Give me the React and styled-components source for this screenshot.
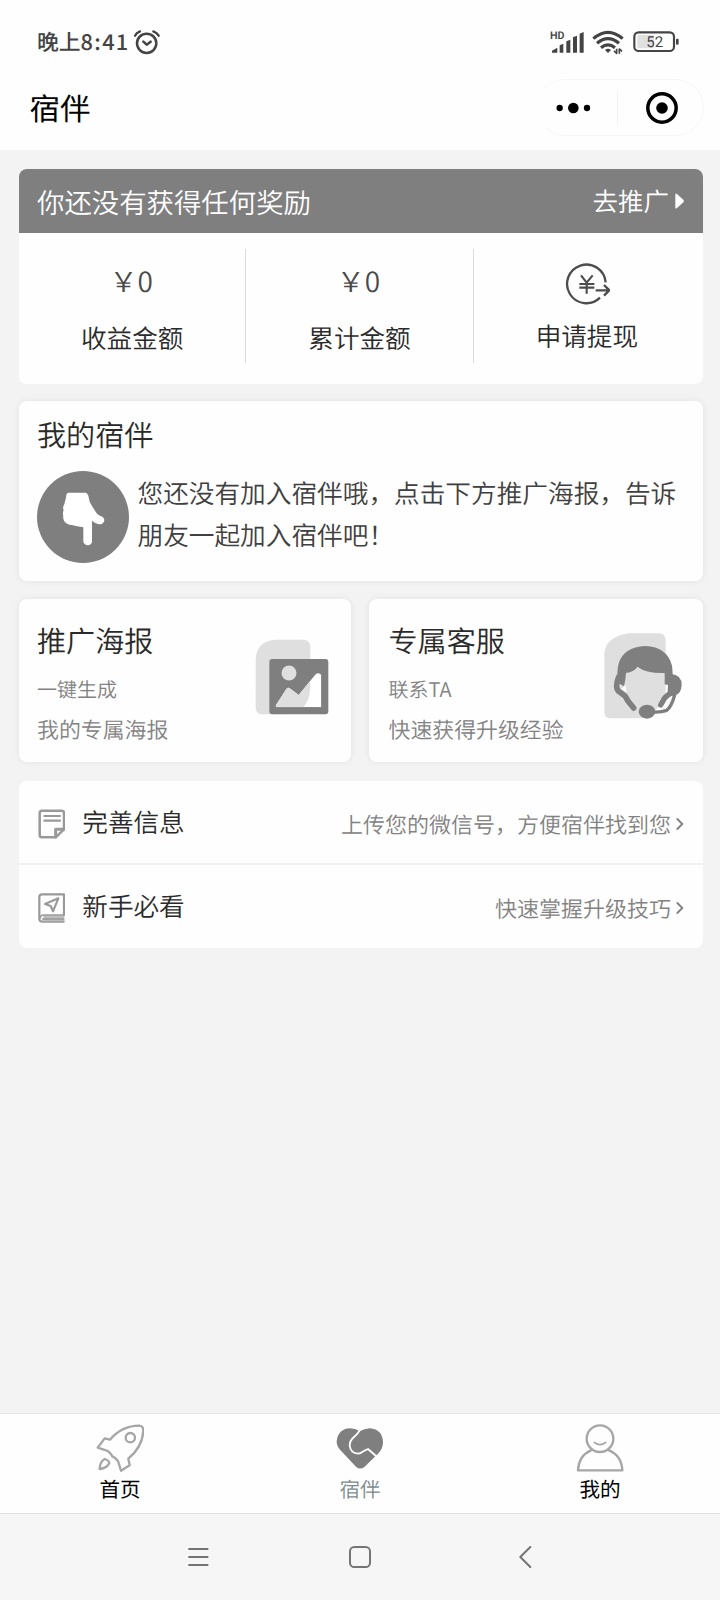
import React from 'react';
import styled, { createGlobalStyle } from 'styled-components';

const colors = {
  page: '#f3f3f3',
  banner: '#7f7f7f',
  text: '#2a2a2a',
  body: '#404040',
  muted: '#828282',
  icon: '#999',
  light: '#dfdfdf',
  status: '#444',
};

const GlobalStyle = createGlobalStyle`
  * {
    box-sizing: border-box;
  }
  body {
    margin: 0;
    background: ${colors.page};
    font-family: 'Noto Sans CJK SC', 'Noto Sans', sans-serif;
    font-weight: 350;
    color: ${colors.text};
    text-rendering: geometricPrecision;
  }
`;

const Screen = styled.div`
  display: flex;
  flex-direction: column;
  width: 720px;
  height: 1600px;
  background: ${colors.page};
`;

const StatusBar = styled.div`
  display: flex;
  align-items: center;
  height: 65px;
  padding: 19px 41px 0 37px;
  background: #fefefe;
`;

const Clock = styled.span`
  margin-right: auto;
  display: flex;
  align-items: center;
  font-size: 21.8px;
  font-weight: 500;
  line-height: 40px;
  color: ${colors.status};
`;

const Digits = styled.span`
  margin-right: 3px;
  letter-spacing: 1.3px;
`;

const StatusIcons = styled.div`
  display: flex;
  align-items: center;
  gap: 9px;

  svg:first-child {
    margin-right: -2px;
  }
`;

const NavBar = styled.div`
  display: flex;
  align-items: center;
  justify-content: space-between;
  height: 85px;
  padding: 0 16px 2px 29.5px;
  background: #fefefe;
`;

const NavTitle = styled.h1`
  margin: 0;
  font-size: 30.5px;
  font-weight: 400;
  line-height: 44px;
  color: #000;
`;

const Capsule = styled.div`
  display: flex;
  width: 167px;
  height: 57px;
  margin-top: 2px;
  border: 1px solid #f6f6f6;
  border-left-color: transparent;
  border-radius: 29px;
`;

const CapsuleMenu = styled.div`
  display: flex;
  align-items: center;
  width: 79px;
  padding-left: 18px;
`;

const CapsuleClose = styled.div`
  flex: 1;
  display: flex;
  align-items: center;
  justify-content: center;
  padding-left: 4px;
  position: relative;

  &::before {
    content: '';
    position: absolute;
    left: 0;
    top: 10px;
    bottom: 10px;
    width: 1px;
    background: #f2f2f2;
  }
`;

const Content = styled.main`
  flex: 1;
  display: flex;
  flex-direction: column;
  padding: 19px 17px 0 19px;
`;

const Card = styled.section`
  border-radius: 8px;
  background: #fefefe;
  box-shadow: 0 0 7px rgba(0, 0, 0, 0.07);
`;

const RewardCard = styled(Card)`
  height: 215px;
  margin-bottom: 17px;
  overflow: hidden;
  box-shadow: none;
`;

const Banner = styled.div`
  display: flex;
  align-items: center;
  justify-content: space-between;
  height: 64px;
  padding: 0 19px 1px 18px;
  background: ${colors.banner};
  color: #fff;
  font-size: 27.4px;
  line-height: 40px;
`;

const BannerLink = styled.span`
  display: flex;
  align-items: center;
  gap: 6px;
  font-size: 25.5px;
`;

const Stats = styled.div`
  display: flex;
  padding: 16px 3px 0 0;
`;

const Stat = styled.div`
  flex: 1;
  display: flex;
  flex-direction: column;
  align-items: center;
  height: 114px;
  border-right: ${props => (props.$last ? 'none' : '1px solid #dcdcdc')};
`;

const StatValue = styled.span`
  margin: 12px 2px 19px 0;
  font-size: 28px;
  line-height: 40px;
  color: #4a4a4a;
`;

const StatIcon = styled.div`
  height: 44px;
  margin: 13px 0 12px;
`;

const StatLabel = styled.span`
  font-size: 25.6px;
  line-height: 36px;
`;

const MateCard = styled(Card)`
  height: 180px;
  margin-bottom: 18px;
  padding: 12px 18px 0;
`;

const CardTitle = styled.h2`
  margin: 0;
  font-size: 29.1px;
  font-weight: inherit;
  line-height: 42px;
  color: ${colors.text};
`;

const Hint = styled.div`
  display: flex;
  align-items: center;
  gap: 8.5px;
  margin-top: 16px;
`;

const HintText = styled.p`
  margin: 0 -8px 6px 0;
  font-size: 25.66px;
  line-height: 42px;
  color: ${colors.body};
`;

const Tiles = styled.div`
  display: grid;
  grid-template-columns: 332px 334px;
  gap: 18px;
  margin-bottom: 19px;
`;

const Tile = styled(Card)`
  display: flex;
  justify-content: space-between;
  height: 163px;
  padding: 20px ${props => props.$right}px 0 ${props => props.$left}px;
`;

const TileText = styled.div`
  display: flex;
  flex-direction: column;
  color: ${colors.muted};
`;

const TileSmall = styled.span`
  margin-top: 12.5px;
  font-size: 20px;
  line-height: 30px;
`;

const TileLine = styled.span`
  margin-top: 10.5px;
  font-size: 21.9px;
  line-height: 32px;
`;

const TileArt = styled.div`
  margin-top: ${props => props.$top}px;
`;

const List = styled(Card)`
  box-shadow: none;
`;

const Row = styled.div`
  display: flex;
  align-items: center;
  height: 84px;
  padding: 3px 19px 0;

  & + & {
    height: 83px;
  }
  &:first-child {
    border-bottom: 2px solid #f1f1f1;
  }
`;

const RowTitle = styled.span`
  margin: 0 auto 4px 17px;
  font-size: 25.6px;
  line-height: 36px;
`;

const RowHint = styled.span`
  display: flex;
  align-items: center;
  gap: 5px;
  font-size: 22px;
  line-height: 32px;
  color: ${colors.muted};
`;

const TabBar = styled.nav`
  display: flex;
  height: 101px;
  border-top: 1px solid #e6e6e6;
  border-bottom: 1px solid #e2e2e2;
  background: #fefefe;
`;

const Tab = styled.div`
  flex: 1;
  display: flex;
  flex-direction: column;
  align-items: center;
  padding-top: 9.5px;
  font-size: 20.6px;
  font-weight: ${props => (props.$active ? 350 : 400)};
  line-height: 30px;
  color: ${props => (props.$active ? '#7f8c8c' : '#000')};

  svg {
    margin-bottom: 1px;
  }
`;

const SystemBar = styled.div`
  display: flex;
  align-items: center;
  justify-content: space-between;
  height: 86px;
  padding: 0 188px 1px;
  background: #f6f6f6;

  svg:last-child {
    margin-left: 8px;
  }
`;

// every icon is drawn on a grid of 3 units per pixel
const Icon = ({ box, children, ...rest }) => {
  const [, , w, h] = box.split(' ');
  return (
    <svg
      display="block"
      width={w / 3}
      height={h / 3}
      viewBox={box}
      fill="none"
      strokeLinecap="round"
      strokeLinejoin="round"
      {...rest}
    >
      {children}
    </svg>
  );
};

const AlarmIcon = () => (
  <Icon box="396 86 84 78" stroke={colors.status} strokeWidth="7.5">
    <circle cx="437" cy="129" r="29" />
    <path d="M402 106Q406 97 417 93M457 93Q468 97 473 106" strokeWidth="7" />
    <path d="M427 124l10 9 12-9" />
  </Icon>
);

const SignalIcon = () => (
  <Icon box="568 90 104 72" fill={colors.status}>
    <text x="568" y="117" fontSize="32" fontWeight="600" fontFamily="Roboto, sans-serif">
      HD
    </text>
    <path d="M574 158V152L590 143V158ZM597 158V136L608 131V158ZM617 158V124L629 119V158ZM637 158V112L649 107V158ZM657 158V101L669 96V158Z" />
  </Icon>
);

const WifiIcon = () => (
  <Icon box="694 88 96 76" stroke={colors.status} strokeWidth="9.5" strokeLinecap="butt">
    <path d="M698 117Q742 79 786 117M709 131Q742 103 775 131M721 144Q742 127 763 144" />
    <path d="M733 151Q742 143 751 151L742 160Z" fill={colors.status} stroke="none" />
    <path d="M768 147V161L760 154M776 162V148L784 155" strokeWidth="5" />
  </Icon>
);

const BatteryIcon = () => (
  <Icon box="817 94 138 64">
    <rect x="830" y="106" width="50" height="40" rx="5" fill="#e0e0e0" />
    <rect x="821" y="98" width="119" height="56" rx="13" stroke={colors.status} strokeWidth="6.5" />
    <rect x="946" y="117" width="8" height="18" rx="3" fill={colors.status} />
    <text
      x="882"
      y="143"
      textAnchor="middle"
      fontSize="45"
      fontWeight="400"
      fontFamily="Roboto, sans-serif"
      fill={colors.status}
    >
      52
    </text>
  </Icon>
);

const DotsIcon = () => (
  <Icon box="588 304 104 36" fill="#000">
    <circle cx="599" cy="322" r="9.5" />
    <circle cx="640" cy="322" r="16" />
    <circle cx="681" cy="322" r="9.5" />
  </Icon>
);

const TargetIcon = () => (
  <Icon box="858 276 96 96">
    <circle cx="906" cy="324" r="42.5" stroke="#000" strokeWidth="10.5" />
    <circle cx="906" cy="324" r="17.5" fill="#000" />
  </Icon>
);

const CaretIcon = () => (
  <Icon box="944 132 27 48" fill="#fff">
    <path d="M945 137Q945 131 950 135L969 152Q972 156 969 160L950 177Q945 181 945 175Z" />
  </Icon>
);

const WithdrawIcon = () => (
  <Icon box="608 336 142 130" stroke="#4d4d4d" strokeWidth="7" strokeLinecap="butt">
    <path d="M736 397A58 58 0 1 0 719 443" />
    <path d="M706 421H746M731 405L747 421L731 437" />
    <path d="M662 376L679 398L697 376M679 398V431M657 402H702M657 413H702" strokeWidth="6.5" />
  </Icon>
);

const HandIcon = () => (
  <Icon box="110 242 276 276">
    <circle cx="248" cy="380" r="138" fill={colors.banner} />
    <path
      fill="#fff"
      d="M204 307H256Q262 308 264 316L268 334Q276 350 290 370Q296 376 306 379Q314 384 311 394Q306 403 296 402Q284 400 275 391V455Q273 464 263 465Q252 464 249 455V411Q230 408 214 404Q200 403 193 394Q187 386 189 376Q186 368 190 360Q186 350 192 342Q194 332 197 322Q197 309 204 307Z"
    />
  </Icon>
);

const PosterIcon = () => (
  <Icon box="764 148 222 228">
    <clipPath id="hill">
      <path d="M827 346L858 298Q863 291 870 297L895 316L946 254Q955 246 963 256V353H830Q824 352 827 346Z" />
    </clipPath>
    <path id="sheet" fill={colors.light} d="M826 150H908Q930 151 930 172V290Q928 374 850 374H784Q766 372 766 354V210Q768 154 826 150Z" />
    <rect x="807" y="208" width="177" height="166" rx="9" fill={colors.banner} />
    <circle cx="866" cy="250" r="22.5" fill={colors.light} />
    <g clipPath="url(#hill)">
      <rect x="807" y="208" width="177" height="166" fill="#fff" />
      <use href="#sheet" />
    </g>
  </Icon>
);

const ServiceIcon = () => (
  <Icon box="732 130 234 258" stroke={colors.banner} strokeWidth="14">
    <path
      stroke="none"
      fill={colors.light}
      d="M806 131H896Q917 132 917 154V330L895 352L862 386H748Q733 384 733 368V190Q738 142 806 131Z"
    />
    <path d="M776 262Q764 292 775 304L796 320L804 334L821 355" strokeWidth="17" />
    <path d="M784 298L796 286L800 308Z" fill="#fff" stroke="none" />
    <path
      stroke="none"
      fill={colors.banner}
      d="M774 280Q770 240 776 222Q790 172 856 169Q922 172 936 228Q938 243 938 254Q965 258 965 285Q964 312 945 317L922 322L924 286L914 284V250Q860 252 832 231Q824 246 798 250Q797 270 792 290Z"
    />
    <path d="M929 312Q914 322 910 332L902 346" strokeWidth="16" />
    <path d="M944 316Q934 352 920 362Q905 368 880 367" strokeWidth="10" />
    <ellipse cx="861" cy="366" rx="25" ry="21" fill={colors.banner} stroke="none" />
  </Icon>
);

const NoteIcon = () => (
  <Icon box="114 119 82 90" stroke={colors.icon} strokeWidth="7.5">
    <path d="M126 124H185Q192 124 192 131V180L167 204H126Q119 204 119 197V131Q119 124 126 124Z" />
    <path d="M167 203V180H191" strokeWidth="9" />
    <path d="M133 140H180M133 154H180" strokeWidth="6.5" />
  </Icon>
);

const GuideIcon = () => (
  <Icon box="114 371 82 90" stroke={colors.icon} strokeWidth="6.5">
    <path d="M192 436V375H126Q118 375 118 383V448Q118 457 128 457H191" />
    <path d="M130 438H193V456H130Z" fill="#bdbdbd" stroke="none" />
    <path d="M120 446Q122 437 130 437H192M128 449H191" strokeWidth="5" />
    <path d="M135 404L175 387L159 426L152 410Z" />
  </Icon>
);

const ChevronIcon = () => (
  <Icon box="947 144 24 40" stroke={colors.muted} strokeWidth="5.5">
    <path d="M951 150L966 165L951 180" />
  </Icon>
);

const RocketIcon = () => (
  <Icon box="288 70 146 144" stroke="#a6a6a6" strokeWidth="7">
    <path d="M330 117Q366 75 418 75Q430 76 430 90Q428 138 385 174L389 194L363 210L354 181Q345 170 337 167Q328 151 318 149L293 141L314 113Z" />
    <circle cx="391" cy="111" r="14" />
    <path d="M299 205Q299 184 314 175Q327 179 328 187Q322 202 299 205Z" />
  </Icon>
);

const HeartIcon = () => (
  <Icon box="1008 70 144 144">
    <path
      fill={colors.banner}
      d="M1079 92Q1066 83 1050 83Q1014 85 1010 122Q1010 136 1020 147L1068 198Q1080 209 1094 198L1137 156Q1149 142 1149 124Q1147 86 1110 83Q1092 84 1079 92Z"
    />
    <path
      d="M1079 89Q1074 99 1062 109Q1049 120 1049 135Q1052 158 1074 159Q1082 159 1088 153Q1096 148 1104 145L1128 166"
      stroke="#fefefe"
      strokeWidth="5.5"
    />
  </Icon>
);

const PersonIcon = () => (
  <Icon box="647 70 144 144" stroke="#a6a6a6" strokeWidth="7">
    <circle cx="719" cy="114" r="40" />
    <path d="M702 125Q719 139 736 125" strokeWidth="5" />
    <path d="M692 149Q655 165 653 209H786Q784 165 746 149" />
  </Icon>
);

const rows = [
  { title: '完善信息', hint: '上传您的微信号，方便宿伴找到您', icon: <NoteIcon /> },
  { title: '新手必看', hint: '快速掌握升级技巧', icon: <GuideIcon /> },
];

const tabs = [
  { label: '首页', icon: <RocketIcon /> },
  { label: '宿伴', icon: <HeartIcon />, active: true },
  { label: '我的', icon: <PersonIcon /> },
];

const App = () => (
  <Screen>
    <GlobalStyle />
    <StatusBar>
      <Clock>
        晚上<Digits>8:41</Digits>
        <AlarmIcon />
      </Clock>
      <StatusIcons>
        <SignalIcon />
        <WifiIcon />
        <BatteryIcon />
      </StatusIcons>
    </StatusBar>
    <NavBar>
      <NavTitle>宿伴</NavTitle>
      <Capsule>
        <CapsuleMenu>
          <DotsIcon />
        </CapsuleMenu>
        <CapsuleClose>
          <TargetIcon />
        </CapsuleClose>
      </Capsule>
    </NavBar>

    <Content>
      <RewardCard>
        <Banner>
          你还没有获得任何奖励
          <BannerLink>
            去推广
            <CaretIcon />
          </BannerLink>
        </Banner>
        <Stats>
          <Stat>
            <StatValue>￥0</StatValue>
            <StatLabel>收益金额</StatLabel>
          </Stat>
          <Stat>
            <StatValue>￥0</StatValue>
            <StatLabel>累计金额</StatLabel>
          </Stat>
          <Stat $last>
            <StatIcon>
              <WithdrawIcon />
            </StatIcon>
            <StatLabel>申请提现</StatLabel>
          </Stat>
        </Stats>
      </RewardCard>

      <MateCard>
        <CardTitle>我的宿伴</CardTitle>
        <Hint>
          <HandIcon />
          <HintText>
            您还没有加入宿伴哦，点击下方推广海报，告诉
            <br />
            朋友一起加入宿伴吧！
          </HintText>
        </Hint>
      </MateCard>

      <Tiles>
        <Tile $left={18} $right={22.5}>
          <TileText>
            <CardTitle>推广海报</CardTitle>
            <TileSmall>一键生成</TileSmall>
            <TileLine>我的专属海报</TileLine>
          </TileText>
          <TileArt $top={20}>
            <PosterIcon />
          </TileArt>
        </Tile>
        <Tile $left={19.5} $right={21}>
          <TileText>
            <CardTitle>专属客服</CardTitle>
            <TileSmall>联系TA</TileSmall>
            <TileLine>快速获得升级经验</TileLine>
          </TileText>
          <TileArt $top={14}>
            <ServiceIcon />
          </TileArt>
        </Tile>
      </Tiles>

      <List>
        {rows.map(row => (
          <Row key={row.title}>
            {row.icon}
            <RowTitle>{row.title}</RowTitle>
            <RowHint>
              {row.hint}
              <ChevronIcon />
            </RowHint>
          </Row>
        ))}
      </List>
    </Content>

    <TabBar>
      {tabs.map(tab => (
        <Tab key={tab.label} $active={tab.active}>
          {tab.icon}
          {tab.label}
        </Tab>
      ))}
    </TabBar>
    <SystemBar>
      <Icon box="564 436 62 66" stroke="#757575" strokeWidth="5.5">
        <path d="M567 445H623M567 469H623M567 493H623" />
      </Icon>
      <Icon box="1047 436 66 66" stroke="#757575" strokeWidth="6">
        <rect x="1050" y="439" width="60" height="60" rx="13" />
      </Icon>
      <Icon box="476 436 38 66" stroke="#757575" strokeWidth="6">
        <path d="M510 439L480 469L510 499" />
      </Icon>
    </SystemBar>
  </Screen>
);

export default App;
